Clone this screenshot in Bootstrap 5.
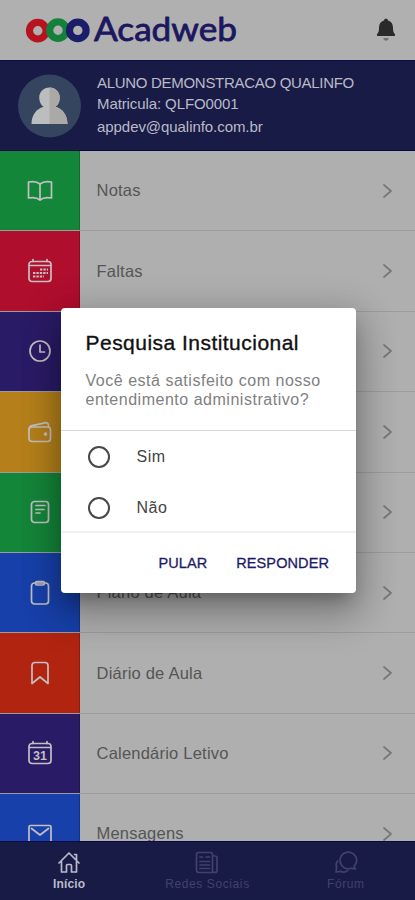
<!DOCTYPE html>
<html lang="pt-BR">
<head>
<meta charset="utf-8">
<meta name="viewport" content="width=device-width, initial-scale=1">
<title>Acadweb</title>
<link href="https://cdn.jsdelivr.net/npm/bootstrap@5.3.0/dist/css/bootstrap.min.css" rel="stylesheet">
<style>
html,body{height:100%}
body{font-family:"Liberation Sans",Arial,sans-serif;background:#b0b0b0;overflow:hidden}
svg{display:block;flex:none}
.app-shell{height:900px;background:#b0b0b0}
.app-top{height:60px;padding:0 18px 0 25px}
.profile-bar{height:91px;background:#191b47;border-top:1px solid #0d0d48;border-bottom:1px solid #0b0943;padding:0 18px;color:#b9bac6;font-size:15px;gap:16px}
.profile-name{letter-spacing:-.3px;line-height:21px}
.profile-id{letter-spacing:-.1px;line-height:22px}
.profile-mail{letter-spacing:-.06px;line-height:24px}
.menu-list{min-height:0}
.menu-line{height:80.4px;flex:none;background:#afafaf;color:#555;font-size:16.5px;letter-spacing:.22px;border-bottom:1px solid #9c9c9c}
.menu-tile{width:80px;color:#c3c0c2;border-right:1px solid #0003}
.menu-tile .ico{margin-left:1px}
.menu-text{padding:0 17px 0 16.5px}
.arrow{color:#777}
.t-green{background:#148639}.t-red{background:#b00e2d}.t-purple{background:#2a1b66}
.t-yellow{background:#b5801b}.t-blue{background:#1740aa}.t-orange{background:#b12410}
.ico{fill:none;stroke:currentColor;stroke-width:1.700;stroke-linecap:round;stroke-linejoin:round}
.tab-strip{height:59px;background:#191b47;border-top:1px solid #0b0943;color:#41426a;font-size:12px;letter-spacing:.6px;line-height:14px}
.tab-strip .on{color:#b9bac8;letter-spacing:.15px;font-weight:700}
.tab-cell{flex:1 1 0;padding-top:9px;gap:3px}
.survey{left:60.5px;top:308px;width:295.5px;height:285px;border-radius:4px;background:#fff;box-shadow:0 11px 15px -7px rgba(0,0,0,.25),0 24px 38px 3px rgba(0,0,0,.18),0 6px 34px 8px rgba(0,0,0,.16)}
.survey-head{height:123px;padding:22px 25px 0;border-bottom:1px solid #d6d9da}
.survey-title{font-size:21px;letter-spacing:.47px;line-height:25px;color:#111;-webkit-text-stroke:.35px #111;white-space:nowrap;margin:0 0 17px}
.survey-text{font-size:16px;letter-spacing:.52px;line-height:18.5px;color:#808080;white-space:nowrap;margin:0}
.survey-body{height:102px;border-bottom:2px solid #eff0f1}
.choice{height:51px;padding-left:27px;gap:27px;font-size:16px;letter-spacing:.5px;color:#444}
.ring{width:22px;height:22px;border:2px solid #484848;border-radius:50%}
.survey-foot{height:60px;padding:2px 27px 0 0;gap:29px;color:#1c1c66;font-size:14.5px;letter-spacing:.1px;-webkit-text-stroke:.3px #1c1c66}
.wordmark{font-family:Lato,sans-serif;font-size:32px;font-weight:400;fill:#1b1760;stroke:#1b1760;stroke-width:.8;stroke-linejoin:round}
</style>
<script src="https://cdn.jsdelivr.net/npm/bootstrap@5.3.0/dist/js/bootstrap.bundle.min.js"></script>
</head>
<body>
<div class="app-shell d-flex flex-column position-relative overflow-hidden">
  <header class="app-top d-flex align-items-center justify-content-between flex-shrink-0">
    <svg width="214" height="40" viewBox="25 10 214 40" role="img" aria-label="Acadweb">
      <g fill="none" stroke-width="7.200">
        <circle cx="37.8" cy="30.7" r="8.300" stroke="#b61220"/>
        <circle cx="58" cy="30.200" r="8.300" stroke="#14813b"/>
        <circle cx="77.800" cy="30.400" r="8.300" stroke="#1b1d69"/>
      </g>
      <text class="wordmark" x="94" y="40.700" textLength="143" lengthAdjust="spacingAndGlyphs">Acadweb</text>
    </svg>
    <svg width="22" height="26" viewBox="0 0 22 26"><path d="M11 1.8c1.1 0 1.900.7 2 1.600 3.300.9 5 3.600 5 7.300 0 3.600.6 4.900 1.600 6 .9 1 .9 2.300-.6 2.300H3c-1.500 0-1.500-1.300-.6-2.300C3.400 15.600 4 14.300 4 10.700c0-3.700 1.700-6.400 5-7.300.1-.9.900-1.600 2-1.600z" fill="#2a2a2a"/><path d="M8.300 21h5.400c-.3 1.800-1.300 2.700-2.700 2.700S8.600 22.800 8.300 21z" fill="#737373"/></svg>
  </header>

  <section class="profile-bar d-flex align-items-center flex-shrink-0">
    <svg width="63" height="64" viewBox="0 0 63 64"><circle cx="31.500" cy="32" r="31.500" fill="#35445f"/><path d="M31.500 13.500c6 0 10.300 4.400 10.300 10.200 0 3.900-1.700 7.300-4.300 9 7.500 2.300 11.800 8.300 12 17.300h-36c.2-9 4.500-15 12-17.300-2.600-1.700-4.300-5.100-4.300-9 0-5.800 4.300-10.200 10.300-10.200z" fill="#bcbdbe"/><path d="M31.500 13.500c6 0 10.300 4.400 10.300 10.200 0 3.900-1.700 7.300-4.300 9 7.500 2.300 11.800 8.300 12 17.300h-18z" fill="#aaa9a7"/></svg>
    <div class="text-nowrap">
      <div class="profile-name">ALUNO DEMONSTRACAO QUALINFO</div>
      <div class="profile-id">Matricula: QLFO0001</div>
      <div class="profile-mail">appdev@qualinfo.com.br</div>
    </div>
  </section>

  <main class="menu-list flex-grow-1 overflow-hidden d-flex flex-column">
    <div class="menu-line d-flex"><div class="menu-tile t-green d-flex align-items-center justify-content-center">
      <svg class="ico" width="26" height="24" viewBox="0 0 26 24"><path d="M13 5C10 2.500 6 2.300 1.500 3v16c4.500-.7 8.500-.5 11.500 2 3-2.500 7-2.700 11.500-2V3C20 2.300 16 2.500 13 5zM13 5v16"/></svg></div>
      <div class="menu-text d-flex flex-grow-1 align-items-center justify-content-between"><span>Notas</span><svg class="ico arrow" width="22" height="18" viewBox="0 0 22 18"><path d="m8 3 7 6-7 6"/></svg></div></div>
    <div class="menu-line d-flex"><div class="menu-tile t-red d-flex align-items-center justify-content-center">
      <svg class="ico" width="26" height="26" viewBox="0 0 26 26"><rect x="2" y="3.500" width="22" height="20" rx="3"/><path d="M2.500 7.500h21M6 1.500v2M20 1.500v2"/><path d="M13 11.500h8M6 15h15M6 18.500h11" stroke-width="2.200" stroke-linecap="butt" stroke-dasharray="2.400 1"/></svg></div>
      <div class="menu-text d-flex flex-grow-1 align-items-center justify-content-between"><span>Faltas</span><svg class="ico arrow" width="22" height="18" viewBox="0 0 22 18"><path d="m8 3 7 6-7 6"/></svg></div></div>
    <div class="menu-line d-flex"><div class="menu-tile t-purple d-flex align-items-center justify-content-center">
      <svg class="ico" width="24" height="24" viewBox="0 0 24 24"><circle cx="12" cy="12" r="10"/><path d="M12 6v7h4.500"/></svg></div>
      <div class="menu-text d-flex flex-grow-1 align-items-center justify-content-end"><svg class="ico arrow" width="22" height="18" viewBox="0 0 22 18"><path d="m8 3 7 6-7 6"/></svg></div></div>
    <div class="menu-line d-flex"><div class="menu-tile t-yellow d-flex align-items-center justify-content-center">
      <svg class="ico" width="26" height="24" viewBox="0 0 26 24"><rect x="2" y="7" width="21.500" height="14.500" rx="3"/><path d="M2 10c0-3 1-4 3-4.400l13-2.800c2.200-.4 3.500.6 3.500 2.700V7"/><circle cx="18.500" cy="14" r="1" fill="currentColor"/></svg></div>
      <div class="menu-text d-flex flex-grow-1 align-items-center justify-content-end"><svg class="ico arrow" width="22" height="18" viewBox="0 0 22 18"><path d="m8 3 7 6-7 6"/></svg></div></div>
    <div class="menu-line d-flex"><div class="menu-tile t-green d-flex align-items-center justify-content-center">
      <svg class="ico" width="22" height="26" viewBox="0 0 22 26"><rect x="2.500" y="2.500" width="17" height="21" rx="3"/><path d="M7 6.500h9M7 10.500h8M7 14h4"/></svg></div>
      <div class="menu-text d-flex flex-grow-1 align-items-center justify-content-end"><svg class="ico arrow" width="22" height="18" viewBox="0 0 22 18"><path d="m8 3 7 6-7 6"/></svg></div></div>
    <div class="menu-line d-flex"><div class="menu-tile t-blue d-flex align-items-center justify-content-center">
      <svg class="ico" width="22" height="26" viewBox="0 0 22 26"><rect x="2.500" y="3" width="17" height="21" rx="3"/><rect x="6.500" y="1.500" width="9" height="3.500" rx="1.500"/></svg></div>
      <div class="menu-text d-flex flex-grow-1 align-items-center justify-content-between"><span>Plano de Aula</span><svg class="ico arrow" width="22" height="18" viewBox="0 0 22 18"><path d="m8 3 7 6-7 6"/></svg></div></div>
    <div class="menu-line d-flex"><div class="menu-tile t-orange d-flex align-items-center justify-content-center">
      <svg class="ico" width="22" height="26" viewBox="0 0 22 26"><path d="M3 23.500V5.500q0-3 3-3h10q3 0 3 3v18l-8-6.500z"/></svg></div>
      <div class="menu-text d-flex flex-grow-1 align-items-center justify-content-between"><span>Diário de Aula</span><svg class="ico arrow" width="22" height="18" viewBox="0 0 22 18"><path d="m8 3 7 6-7 6"/></svg></div></div>
    <div class="menu-line d-flex"><div class="menu-tile t-purple d-flex align-items-center justify-content-center">
      <svg class="ico" width="26" height="26" viewBox="0 0 26 26"><rect x="2" y="3.500" width="22" height="20" rx="3"/><path d="M2.500 7.500h21M6 1.500v2M20 1.500v2"/><text x="13" y="20.300" text-anchor="middle" font-size="12.500" font-weight="700" fill="currentColor" stroke="none" letter-spacing="0">31</text></svg></div>
      <div class="menu-text d-flex flex-grow-1 align-items-center justify-content-between"><span>Calendário Letivo</span><svg class="ico arrow" width="22" height="18" viewBox="0 0 22 18"><path d="m8 3 7 6-7 6"/></svg></div></div>
    <div class="menu-line d-flex"><div class="menu-tile t-blue d-flex align-items-center justify-content-center">
      <svg class="ico" width="26" height="22" viewBox="0 0 26 22"><rect x="2" y="2.500" width="22" height="18" rx="1.500"/><path d="m4.500 5.500 8.500 6.500 8.500-6.500"/></svg></div>
      <div class="menu-text d-flex flex-grow-1 align-items-center justify-content-between"><span>Mensagens</span><svg class="ico arrow" width="22" height="18" viewBox="0 0 22 18"><path d="m8 3 7 6-7 6"/></svg></div></div>
  </main>

  <nav class="tab-strip d-flex flex-shrink-0">
    <div class="tab-cell on d-flex flex-column align-items-center"><svg class="ico" width="24" height="23" viewBox="0 0 24 23"><path d="M2 12 12 2l10 10M17.500 3.500h2v5.500M4.500 10.500V21h5v-6.500q0-1 1-1h3q1 0 1 1V21h5V10.500"/></svg><span>Início</span></div>
    <div class="tab-cell d-flex flex-column align-items-center"><svg class="ico" width="24" height="23" viewBox="0 0 24 23"><path d="M17.500 5v14q0 2.500 2 2.500H4q-2.500 0-2.500-2.500V3.500Q1.500 1.500 3.500 1.500h12q2 0 2 2zM17.500 5h2.500q2 0 2 2v12.500q0 2-2 2"/><path d="M5 6h2.500M11 6h3.500M5 10.500h9.500M5 14h9.500M5 17.500h9.500"/></svg><span>Redes Sociais</span></div>
    <div class="tab-cell d-flex flex-column align-items-center"><svg class="ico" width="24" height="23" viewBox="0 0 24 23" stroke-width="1.400"><path d="M20 15.500A8.300 8.300 0 1 0 17 17.300l4.300.7z"/><path d="M3.500 10c-1.500 2-1.700 4-.9 6.200L2 21l4.700-.6c2.400 1 4.800.8 7-.8"/></svg><span>Fórum</span></div>
  </nav>

  <div class="survey position-absolute" role="dialog" aria-label="Pesquisa Institucional">
    <div class="survey-head"><h2 class="survey-title fw-normal">Pesquisa Institucional</h2><p class="survey-text">Você está satisfeito com nosso<br>entendimento administrativo?</p></div>
    <div class="survey-body">
      <div class="choice d-flex align-items-center"><span class="ring"></span><span>Sim</span></div>
      <div class="choice d-flex align-items-center"><span class="ring"></span><span>Não</span></div>
    </div>
    <div class="survey-foot d-flex align-items-center justify-content-end"><span>PULAR</span><span>RESPONDER</span></div>
  </div>
</div>
</body>
</html>
